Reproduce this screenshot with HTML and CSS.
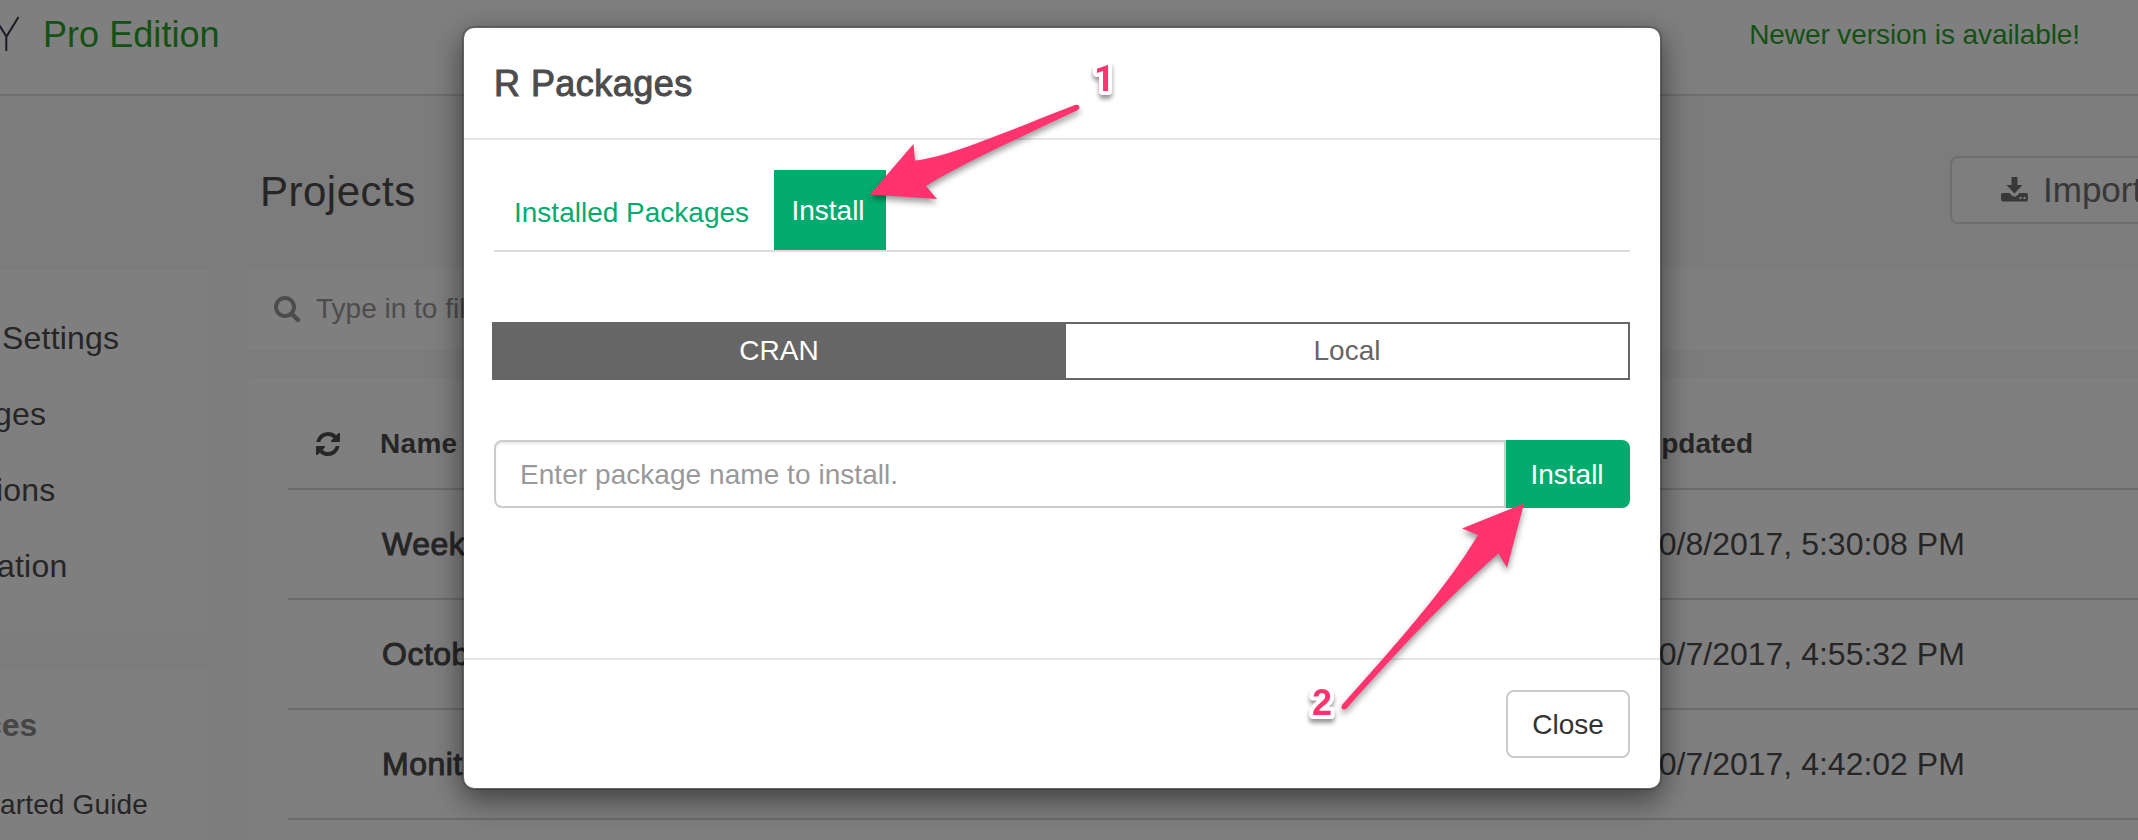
FILE: index.html
```html
<!DOCTYPE html>
<html lang="en">
<head>
<meta charset="utf-8">
<title>R Packages</title>
<link rel="stylesheet" href="styles.css">
</head>
<body>
<div class="page">
  <header class="topbar">
    <svg class="brand" width="20" height="36" viewBox="0 0 20 36"><path d="M-6 1L6.500 20.500L18.500 1M6.300 20V35" fill="none" stroke="#36364a" stroke-width="2"/></svg>
    <span class="edition">Pro Edition</span>
    <span class="notice">Newer version is available!</span>
  </header>
  <div class="columns">
    <aside class="sidebar">
      <nav class="panel menu">
        <a class="item">Settings</a>
        <a class="item ges">ges</a>
        <a class="item ions">ions</a>
        <a class="item ation">ation</a>
      </nav>
      <div class="panel resources">
        <h4>ces</h4>
        <a class="guide">arted Guide</a>
      </div>
    </aside>
    <main class="main">
      <div class="titlebar">
        <h2>Projects</h2>
        <button class="import"><svg width="27" height="26" viewBox="0 0 27 26"><path fill="#707070" d="M10.500 0H16.500V8H21.500L13.500 16.500L5.500 8H10.500ZM2 16H8.500L11.500 19Q13.500 20.500 15.500 19L18.500 16H25Q27 16 27 18V22.500Q27 24.500 25 24.500H2Q0 24.500 0 22.500V18Q0 16 2 16ZM18.500 20V22H20.500V20ZM22.500 20V22H24.500V20Z" fill-rule="evenodd"/></svg><span>Import</span></button>
      </div>
      <div class="search"><svg width="27" height="27" viewBox="0 0 27 27"><g fill="none" stroke="#999" stroke-width="4"><circle cx="11" cy="11" r="9"/><path d="M17.500 17.500L24 24" stroke-linecap="round" stroke-width="4.500"/></g></svg><span>Type in to fil</span></div>
      <div class="table">
        <div class="row head"><svg width="24" height="24" viewBox="0 0 1536 1536"><path fill="#4c4c4c" d="M1511 928q0 5-1 7-64 268-268 434.500T764 1536q-146 0-282.500-55T238 1324l-129 129q-19 19-45 19t-45-19-19-45V960q0-26 19-45t45-19h448q26 0 45 19t19 45-19 45l-137 137q71 66 161 102t187 36q134 0 250-65t186-179q11-17 53-117 8-23 30-23h192q13 0 22.500 9.500t9.500 22.500zm25-800v448q0 26-19 45t-45 19h-448q-26 0-45-19t-19-45 19-45l138-138Q969 256 768 256q-134 0-250 65T332 500q-11 17-53 117-8 23-30 23H50q-13 0-22.500-9.500T18 608v-7q65-268 270-434.500T768 0q146 0 284 55.500T1297 212l130-129q19-19 45-19t45 19 19 45z"/></svg><b class="c1">Name</b><b class="c2">Updated</b></div>
        <div class="row"><span class="c1">Week</span><span class="c2">10/8/2017, 5:30:08 PM</span></div>
        <div class="row"><span class="c1">Octob</span><span class="c2">10/7/2017, 4:55:32 PM</span></div>
        <div class="row"><span class="c1">Monit</span><span class="c2">10/7/2017, 4:42:02 PM</span></div>
      </div>
    </main>
  </div>
</div>
<div class="backdrop">
  <section class="modal">
    <header class="modal-header"><h3>R Packages</h3></header>
    <div class="modal-body">
      <div class="tabs"><a class="tab">Installed Packages</a><a class="tab active">Install</a></div>
      <div class="segments"><div class="seg on">CRAN</div><div class="seg">Local</div></div>
      <div class="field"><div class="input">Enter package name to install.</div><button class="go">Install</button></div>
    </div>
    <footer class="modal-footer"><button class="close">Close</button></footer>
  </section>
</div>
<svg class="marks" width="2138" height="840" viewBox="0 0 2138 840">
  <g class="arrow">
    <path d="M870 194.500L913.500 144L915 160.500C948 157 1000 134 1075 105Q1079 104 1079.500 107Q1080 109 1077 110.500C1010 142 960 165 926 186L937 199Z"/>
    <path d="M1524 503.500L1462 528.500L1478 535C1452 578 1420 618 1342 705Q1340.500 708 1343 709.500Q1345 710 1347 708C1400 649 1440 605 1498.500 553.500L1507 568Z"/>
  </g>
  <text class="num one" x="1094" y="91">1</text>
  <text class="num" x="1312" y="715">2</text>
</svg>
</body>
</html>
```
FILE: styles.css
```css
* { box-sizing: border-box; }
body { margin: 0; width: 2138px; height: 840px; overflow: hidden; font-family: "Liberation Sans", Arial, sans-serif; font-size: 28px; color: #4c4c4c; background: #f8f8f8; }
h2, h3, h4 { margin: 0; font-weight: 400; }
button { font: inherit; margin: 0; }
.page { width: 2138px; height: 840px; overflow: hidden; }
.topbar { height: 96px; background: #fff; border-bottom: 2px solid #dcdcdc; display: flex; align-items: flex-start; color: #29a329; }
.brand { margin-top: 16px; }
.edition { margin: 14px 0 0 23px; font-size: 36px; line-height: 42px; letter-spacing: .05px; }
.notice { margin: 18px 58px 0 auto; font-size: 28px; line-height: 33px; letter-spacing: -.08px; }
.columns { display: flex; height: 744px; }
.sidebar { width: 208px; padding-top: 174px; display: flex; flex-direction: column; gap: 36px; overflow: hidden; }
.panel { background: #fff; white-space: nowrap; overflow: hidden; }
.menu { height: 362px; padding-top: 30px; }
.item { display: block; height: 76px; line-height: 76px; font-size: 32px; letter-spacing: .2px; padding-left: 2px; }
.ges, .ions, .ation { padding-left: 0; }
.ges { text-indent: -6px; }
.ions { text-indent: -4px; }
.ation { text-indent: -3px; }
.resources { height: 172px; padding-top: 38px; }
.resources h4 { font-weight: 700; font-size: 32px; line-height: 38px; color: #8c8c8c; text-indent: -16px; }
.guide { display: block; margin-top: 44px; font-size: 28px; line-height: 34px; letter-spacing: .15px; }
.main { margin-left: 40px; width: 1890px; display: flex; flex-direction: column; }
.titlebar { height: 172px; display: flex; align-items: flex-start; justify-content: space-between; }
.titlebar h2 { margin: 71px 0 0 12px; font-size: 42px; line-height: 50px; letter-spacing: .5px; }
.import { margin-top: 60px; width: 188px; height: 68px; padding: 0 0 0 49px; border: 2px solid #dcdcdc; border-right: 0; border-radius: 8px 0 0 8px; background: #fcfcfc; color: #707070; font-size: 35px; display: flex; align-items: center; gap: 15px; white-space: nowrap; overflow: hidden; }
.import svg { flex: none; }
.search { height: 82px; background: #fff; display: flex; align-items: center; gap: 15px; padding-left: 26px; color: #999; }
.table { margin-top: 28px; height: 462px; background: #fff; padding-left: 40px; border-radius: 4px 0 0 0; }
.row { height: 110px; border-bottom: 2px solid #d8d8d8; display: grid; grid-template-columns: 94px 1261px 1fr; align-items: center; font-size: 32px; padding-top: 1px; }
.row .c1 { grid-column: 2; -webkit-text-stroke: 1px; letter-spacing: .5px; }
.row .c2 { grid-column: 3; margin-left: -2px; }
.head { height: 112px; font-size: 28px; padding-top: 22px; }
.head svg { margin-left: 28px; }
.row.head .c1 { -webkit-text-stroke: 0; margin-left: -2px; letter-spacing: .3px; }
.backdrop { position: absolute; inset: 0; background: rgba(0,0,0,.5); padding: 26px 0 0 462px; }
.modal { width: 1200px; height: 764px; border: 2px solid rgba(0,0,0,.2); border-radius: 12px; background: #fff; background-clip: padding-box; box-shadow: 0 10px 30px rgba(0,0,0,.5); display: flex; flex-direction: column; }
.modal-header { height: 112px; border-bottom: 2px solid #e5e5e5; padding: 34px 30px 0; }
.modal-header h3 { font-size: 36px; line-height: 44px; letter-spacing: .45px; -webkit-text-stroke: 1px; }
.modal-body { flex: 1; padding: 30px 30px 0; }
.tabs { height: 82px; border-bottom: 2px solid #ddd; display: flex; color: #03ac6e; }
.tab { width: 280px; padding: 27px 0 0 20px; line-height: 32px; }
.tab.active { width: 112px; height: 80px; padding: 25px 4px 0 0; text-align: center; background: #03ac6e; color: #fff; }
.segments { margin: 70px 0 0 -2px; height: 58px; display: flex; border: 2px solid #666; }
.seg { flex: 1; text-align: center; line-height: 53px; color: #666; }
.seg.on { flex: 0 0 572px; background: #666; color: #fff; padding-right: 2px; }
.field { margin-top: 60px; height: 68px; display: flex; }
.input { flex: 1; border: 2px solid #ccc; border-radius: 8px 0 0 8px; box-shadow: inset 0 2px 2px rgba(0,0,0,.075); padding-left: 24px; line-height: 66px; color: #999; letter-spacing: .05px; }
.go { width: 124px; border: 0; border-radius: 0 8px 8px 0; background: #03ac6e; color: #fff; padding: 2px 2px 0 0; }
.modal-footer { height: 130px; border-top: 2px solid #e5e5e5; padding: 30px; display: flex; justify-content: flex-end; }
.close { width: 124px; height: 68px; border: 2px solid #ccc; border-radius: 8px; background: #fff; color: #333; padding: 2px 0 0; }
.marks { position: absolute; left: 0; top: 0; }
.arrow { fill: #ff346f; filter: drop-shadow(0 4px 3px rgba(0,0,0,.4)); }
.num { font-size: 36px; font-weight: 700; fill: #ff346f; stroke: #fff; stroke-width: 8px; stroke-linejoin: round; paint-order: stroke; filter: drop-shadow(0 4px 2px rgba(0,0,0,.4)); }
.one { font-family: Roboto, "Liberation Sans", sans-serif; }
```
